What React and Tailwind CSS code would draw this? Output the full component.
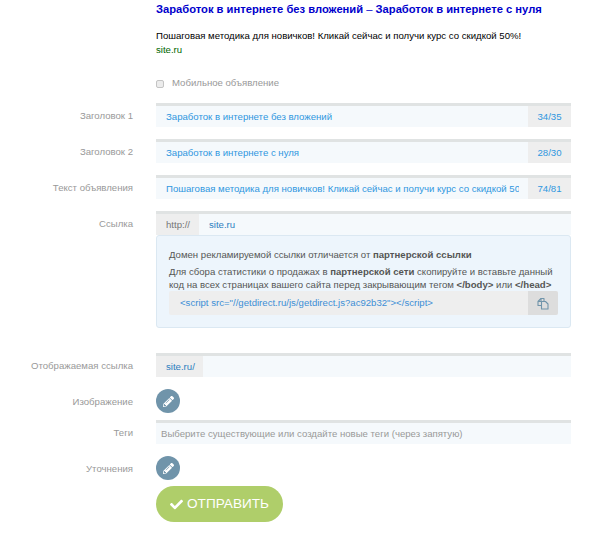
import React from "react";
import { FaCheck, FaPencilAlt } from "react-icons/fa";

const Label = ({ children }) => (
  <div className="w-[133px] h-[24px] mr-[23px] shrink-0 text-right text-[9.6px] leading-[26px] text-[#999999]">
    {children}
  </div>
);

const CountField = ({ value, count }) => (
  <div className="flex-1 min-w-0 flex h-[24px] border-t-[3px] border-[#e0e3e3] bg-[#f5f9fc]">
    <div className="flex-1 min-w-0 overflow-hidden whitespace-nowrap ml-[10px] mr-[9px] text-[9.6px] leading-[21px] text-[#2f97e0]">
      {value}
    </div>
    <div className="w-[43px] shrink-0 text-center bg-[#eeeeee] text-[9.6px] leading-[21px] text-[#2f97e0]">
      {count}
    </div>
  </div>
);

const EditButton = () => (
  <button className="w-[24px] h-[24px] rounded-full bg-[#7094aa] flex items-center justify-center text-white">
    <FaPencilAlt className="w-[11px] h-[11px]" />
  </button>
);

const CopyIcon = () => (
  <svg width="12" height="13" viewBox="0 0 12 13" fill="none" stroke="#7094aa" strokeWidth="1.1" strokeLinejoin="round">
    <path d="M4 8.5H1V4.5L4 1.5H7V4" />
    <path d="M4.5 4.5H8.5L11 7V12H4.5Z" />
    <path d="M1 4.5H4V1.5" />
  </svg>
);

export default function App() {
  return (
    <div className="w-[597px] h-[538px] bg-white overflow-hidden font-['Liberation_Sans',Arial,sans-serif]">
      <div className="pl-[156px] pt-[2px]">
        <div className="text-[11.2px] leading-[15px] font-bold text-[#0000cc]">
          Заработок в интернете без вложений <span className="font-normal">–</span> Заработок в интернете с нуля
        </div>
        <div className="mt-[12px] text-[9.6px] leading-[14px] text-black">
          Пошаговая методика для новичков! Кликай сейчас и получи курс со скидкой 50%!
        </div>
        <div className="text-[9.6px] leading-[14px] text-[#006600]">site.ru</div>
        <label className="mt-[20px] h-[13px] flex items-center text-[9.6px] text-[#999999]">
          <span className="w-[8px] h-[8px] mr-[8px] rounded-[2px] border border-[#c4c4c4] bg-[#ececec]" />
          Мобильное объявление
        </label>
      </div>

      <div className="w-[571px] mt-[13px] flex flex-col">
        <div className="flex">
          <Label>Заголовок 1</Label>
          <CountField value="Заработок в интернете без вложений" count="34/35" />
        </div>
        <div className="flex mt-[12px]">
          <Label>Заголовок 2</Label>
          <CountField value="Заработок в интернете с нуля" count="28/30" />
        </div>
        <div className="flex mt-[12px]">
          <Label>Текст объявления</Label>
          <CountField value="Пошаговая методика для новичков! Кликай сейчас и получи курс со скидкой 50%!" count="74/81" />
        </div>

        <div className="flex mt-[12px]">
          <Label>Ссылка</Label>
          <div className="flex-1 min-w-0">
            <div className="flex h-[24px] border-t-[3px] border-[#e0e3e3] bg-[#f5f9fc]">
              <div className="w-[43px] bg-[#eeeeee] pl-[10px] text-[9.6px] leading-[21px] text-[#777777]">http://</div>
              <div className="pl-[10px] text-[9.6px] leading-[21px] text-[#2f7fc0]">site.ru</div>
            </div>
            <div className="h-[93px] px-[12px] pt-[12px] rounded-[3px] border border-[#dbe8f2] bg-[#edf5fc] text-[9.6px] leading-[13px] text-[#555555]">
              <div>
                Домен рекламируемой ссылки отличается от <b>партнерской ссылки</b>
              </div>
              <div className="mt-[4px]">
                Для сбора статистики о продажах в <b>партнерской сети</b> скопируйте и вставьте данный код на всех страницах вашего сайта перед закрывающим тегом <b>&lt;/body&gt;</b> или <b>&lt;/head&gt;</b>
              </div>
              <div className="flex h-[24px] rounded-[2px] bg-[#eeeeee] overflow-hidden">
                <div className="flex-1 pl-[11px] leading-[24px] text-[#3d8fd6]">
                  &lt;script src="//getdirect.ru/js/getdirect.js?ac92b32"&gt;&lt;/script&gt;
                </div>
                <div className="w-[30px] bg-[#dddddd] flex items-center justify-center">
                  <CopyIcon />
                </div>
              </div>
            </div>
          </div>
        </div>

        <div className="flex mt-[25px]">
          <Label>Отображаемая ссылка</Label>
          <div className="flex-1 flex h-[24px] border-t-[3px] border-[#e0e3e3] bg-[#f5f9fc]">
            <div className="w-[47px] bg-[#eeeeee] pl-[10px] text-[9.6px] leading-[21px] text-[#2f7fc0]">site.ru/</div>
          </div>
        </div>

        <div className="flex mt-[12px]">
          <Label>Изображение</Label>
          <EditButton />
        </div>

        <div className="flex mt-[7px]">
          <Label>Теги</Label>
          <div className="flex-1 h-[24px] border-t-[3px] border-[#e0e3e3] bg-[#f5f9fc] pl-[5px] text-[9.6px] leading-[21px] text-[#999999]">
            Выберите существующие или создайте новые теги (через запятую)
          </div>
        </div>

        <div className="flex mt-[12px]">
          <Label>Уточнения</Label>
          <EditButton />
        </div>

        <div className="flex mt-[6px]">
          <div className="w-[156px] shrink-0" />
          <button className="w-[127px] h-[36px] rounded-[18px] bg-[#afce6a] flex items-center justify-center text-white text-[13.6px]">
            <FaCheck className="w-[13px] h-[13px] mr-[4px]" />
            ОТПРАВИТЬ
          </button>
        </div>
      </div>
    </div>
  );
}
